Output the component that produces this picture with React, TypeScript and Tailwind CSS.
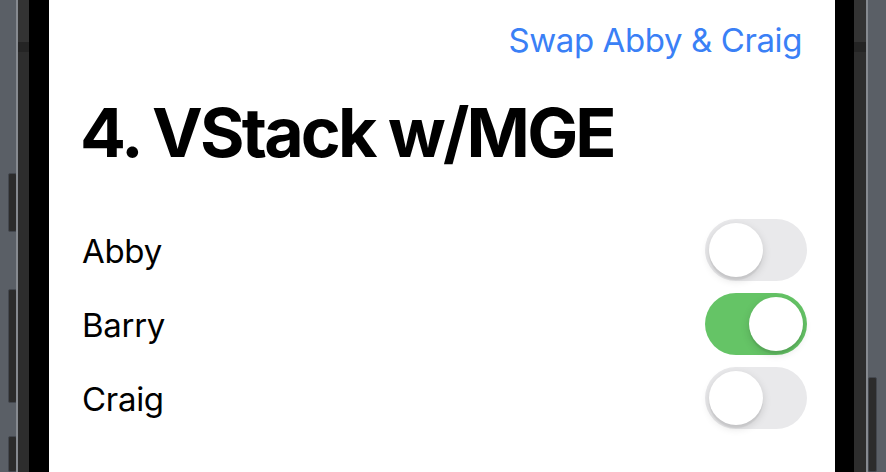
import { useState } from "react";

type Person = { name: string; on: boolean };

const Toggle = ({ on, onClick }: { on: boolean; onClick: () => void }) => (
  <button
    onClick={onClick}
    className={`flex h-[62px] w-[102px] items-center rounded-full p-[4px] ${
      on ? "justify-end bg-[#65c466]" : "justify-start bg-[#e9e9eb]"
    }`}
  >
    <span className="block h-[54px] w-[54px] rounded-full bg-white shadow-[0_3px_8px_rgba(0,0,0,0.15),0_3px_1px_rgba(0,0,0,0.06)]" />
  </button>
);

const SideButton = ({ className }: { className: string }) => (
  <div className={`w-[9px] rounded-[2px] border border-[#44484f] bg-[#2c2c2c] ${className}`} />
);

const App = () => {
  const [people, setPeople] = useState<Person[]>([
    { name: "Abby", on: false },
    { name: "Barry", on: true },
    { name: "Craig", on: false },
  ]);

  const swap = () =>
    setPeople((p) => {
      const next = [...p];
      [next[0], next[2]] = [next[2], next[0]];
      return next;
    });

  const flip = (i: number) =>
    setPeople((p) => p.map((x, j) => (j === i ? { ...x, on: !x.on } : x)));

  return (
    <div className="flex h-[472px] w-[886px] overflow-hidden bg-white font-['Inter',sans-serif]">
      {/* left bezel */}
      <div className="flex w-[16px] flex-col bg-[#5a5f66] pl-[8px]">
        <SideButton className="mt-[173px] h-[65px]" />
        <SideButton className="mt-[57px] h-[125px]" />
        <SideButton className="mt-[33px] h-[40px]" />
      </div>
      <div className="w-[2px] bg-[#868a90]" />
      <div className="flex w-[11px] flex-col bg-[#2d2d2d]">
        <div className="h-[42px] bg-[#333333]" />
        <div className="h-[10px] bg-[#242424]" />
      </div>
      <div className="w-[20px] bg-black" />

      {/* screen */}
      <div className="flex flex-1 flex-col bg-white pl-[33px] pr-[28px] pt-[20px]">
        <button
          onClick={swap}
          className="self-end pr-[5px] text-[33px] leading-[40px] tracking-[-0.4px] text-[#3a80f6]"
        >
          Swap Abby &amp; Craig
        </button>
        <h1 className="-ml-[2px] mt-[32px] text-[68px] font-bold leading-[80px] tracking-[-2.8px] text-black">
          4. VStack w/MGE
        </h1>
        <div className="mt-[47px] flex flex-col gap-[12px]">
          {people.map((p, i) => (
            <div key={p.name} className="flex h-[62px] items-center justify-between">
              <span className="pt-[3px] text-[33px] tracking-[-0.3px] text-black">{p.name}</span>
              <Toggle on={p.on} onClick={() => flip(i)} />
            </div>
          ))}
        </div>
      </div>

      {/* right bezel */}
      <div className="w-[19px] bg-black" />
      <div className="flex w-[12px] flex-col bg-[#2d2d2d]">
        <div className="h-[42px] bg-[#333333]" />
        <div className="h-[10px] bg-[#242424]" />
      </div>
      <div className="w-[2px] bg-[#868a90]" />
      <div className="flex w-[18px] flex-col bg-[#5a5f66]">
        <SideButton className="mt-[377px] h-[120px]" />
      </div>
    </div>
  );
};

export default App;
